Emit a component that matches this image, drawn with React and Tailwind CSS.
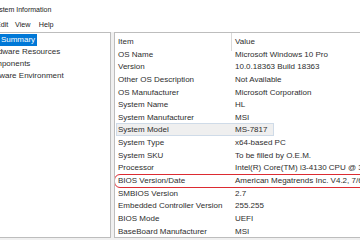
import React from "react";

const rows = [
  ["Item", "Value"],
  ["OS Name", "Microsoft Windows 10 Pro"],
  ["Version", "10.0.18363 Build 18363"],
  ["Other OS Description", "Not Available"],
  ["OS Manufacturer", "Microsoft Corporation"],
  ["System Name", "HL"],
  ["System Manufacturer", "MSI"],
  ["System Model", "MS-7817"],
  ["System Type", "x64-based PC"],
  ["System SKU", "To be filled by O.E.M."],
  ["Processor", "Intel(R) Core(TM) i3-4130 CPU @ 3.40GHz, 3400 Mhz, 2 Core(s), 4 Logical Processor(s)"],
  ["BIOS Version/Date", "American Megatrends Inc. V4.2, 7/6/2015"],
  ["SMBIOS Version", "2.7"],
  ["Embedded Controller Version", "255.255"],
  ["BIOS Mode", "UEFI"],
  ["BaseBoard Manufacturer", "MSI"],
];

export default function App() {
  return (
    <div
      className="w-[360px] h-[240px] overflow-hidden bg-white text-[#2e2e2e]"
      style={{ fontFamily: '"Liberation Sans", Arial, sans-serif' }}
    >
      {/* Title bar */}
      <div className="h-[18px] flex items-center whitespace-nowrap">
        <span className="ml-[-9px] text-[7px] leading-none text-[#1a1a1a]">System Information</span>
      </div>
      {/* Menu bar */}
      <div className="h-[14px] flex items-center whitespace-nowrap text-[7.2px] leading-none text-[#1a1a1a]">
        <span className="ml-[-4.1px]">Edit</span>
        <span className="ml-[6.7px]">View</span>
        <span className="ml-[8.4px]">Help</span>
      </div>
      {/* Main area */}
      <div className="h-[206px] flex">
        {/* Left tree pane */}
        <div className="w-[111px] border-t border-r border-b border-[#bdbdbd] bg-white pt-[1px] text-[8px] leading-[12px] whitespace-nowrap overflow-hidden">
          <div className="h-[12px] flex">
            <span className="ml-[-30px] px-[2px] bg-[#0078d7] text-white">System Summary</span>
          </div>
          <div className="h-[12px] flex">
            <span className="ml-[-17px] px-[2px]">Hardware Resources</span>
          </div>
          <div className="h-[12px] flex">
            <span className="ml-[-17px] px-[2px]">Components</span>
          </div>
          <div className="h-[12px] flex">
            <span className="ml-[-17px] px-[2px]">Software Environment</span>
          </div>
        </div>
        {/* Splitter */}
        <div className="w-[3px] bg-[#f0f0f0]" />
        {/* Right list pane */}
        <div className="flex-1 border-t border-l border-b border-[#bdbdbd] bg-white pt-[3px] text-[8px] whitespace-nowrap overflow-hidden">
          {rows.map(([item, value], i) => (
            <div key={i} className="relative h-[12.65px] leading-[12.65px] grid grid-cols-[117px_1fr]">
              {i === 7 && (
                <div className="absolute left-[1px] top-[-1px] w-[158px] h-[13px] bg-[#efefef] border border-[#cfdbe8]" />
              )}
              {i === 11 && (
                <div className="absolute left-[-1px] top-[-0.8px] right-[-12px] h-[14px] border-[1.6px] border-[#dc2b32] rounded-[6px]" />
              )}
              <span className="relative pl-[3px]">{item}</span>
              <span className="relative pl-[3px] overflow-hidden">{value}</span>
              {i === 0 && (
                <div className="absolute left-[116px] top-[-3px] bottom-[-2px] w-px bg-[#dadada]" />
              )}
            </div>
          ))}
        </div>
      </div>
      <div className="h-[2px] bg-[#f0f0f0]" />
    </div>
  );
}
